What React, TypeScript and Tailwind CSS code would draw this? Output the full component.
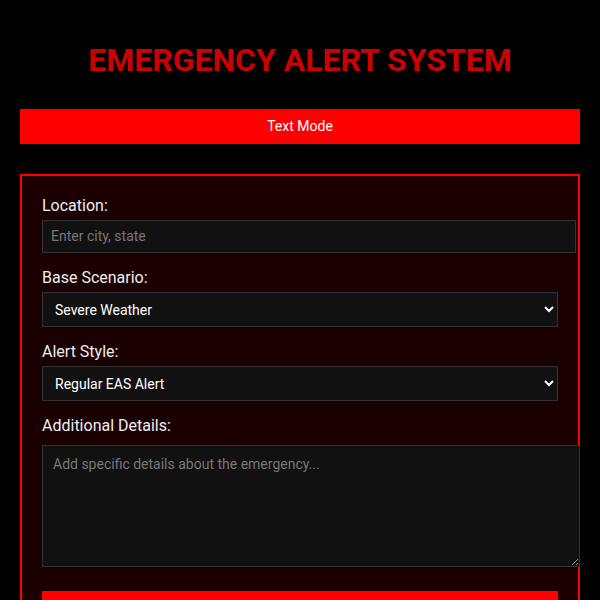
export default function App() {
  return (
    <div className="min-h-screen bg-black px-5 pt-5 font-['Roboto',sans-serif] text-[#eeeeee]">
      <h1 className="mt-[21px] mb-[30px] text-center text-[32px] leading-[38px] font-bold text-[#cc0000]">
        EMERGENCY ALERT SYSTEM
      </h1>

      <button className="block h-[35px] w-full bg-[#ff0000] text-[14px] text-white">Text Mode</button>

      <form className="mt-[30px] border-2 border-[#ff0000] bg-[#1a0000] p-5">
        <div className="mb-[15px]">
          <label className="mb-[5px] block text-[16px] leading-[19px]">Location:</label>
          <input
            type="text"
            placeholder="Enter city, state"
            className="box-content block h-[15px] w-full border border-[#333333] bg-[#111111] px-2 py-2 text-[14px] leading-[15px] text-white placeholder:text-[#777777]"
          />
        </div>

        <div className="mb-[15px]">
          <label className="mb-[5px] block text-[16px] leading-[19px]">Base Scenario:</label>
          <select className="block h-[35px] w-full border border-[#333333] bg-[#111111] px-2 text-[14px] text-white [color-scheme:dark]">
            <option>Severe Weather</option>
          </select>
        </div>

        <div className="mb-[15px]">
          <label className="mb-[5px] block text-[16px] leading-[19px]">Alert Style:</label>
          <select className="block h-[35px] w-full border border-[#333333] bg-[#111111] px-2 text-[14px] text-white [color-scheme:dark]">
            <option>Regular EAS Alert</option>
          </select>
        </div>

        <div className="mb-[24px]">
          <label className="mb-[10px] block text-[16px] leading-[19px]">Additional Details:</label>
          <textarea
            placeholder="Add specific details about the emergency..."
            className="box-content block h-[100px] w-full border border-[#333333] bg-[#111111] p-[10px] text-[14px] leading-[17px] text-white placeholder:text-[#777777] [color-scheme:dark]"
          />
        </div>

        <button type="button" className="block h-[40px] w-full bg-[#ff0000] text-[16px] font-bold text-white">
          Generate Alert
        </button>
      </form>
    </div>
  );
}
